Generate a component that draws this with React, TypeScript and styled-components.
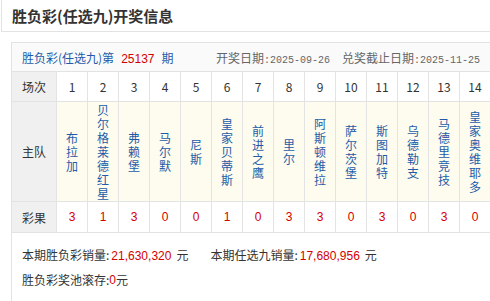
import styled, { createGlobalStyle } from "styled-components";

const GlobalStyle = createGlobalStyle`
    body {
        margin: 0;
        background: #fff;
        font-family: "Noto Sans CJK SC", "Liberation Sans", sans-serif;
        font-size: 12px;
        color: #333;
        overflow: hidden;
    }
`;

const TitleBox = styled.div`
    margin: -1px 0 0 1px;
    width: 490px;
    height: 33px;
    box-sizing: border-box;
    border: 1px solid #e3e3e3;
    padding-left: 10px;
    display: flex;
    align-items: center;
`;
const Title = styled.h1`
    margin: 0;
    font-size: 15px;
    font-weight: 700;
    color: #333;
`;
const Panel = styled.div`
    margin: 10px 0 0 11px;
    width: 480px;
    box-sizing: border-box;
    border: 1px solid #e3e3e3;
`;
const PanelHead = styled.div`
    height: 29px;
    box-sizing: border-box;
    border-bottom: 1px solid #e3e3e3;
    background: #fafafa;
    padding: 0 10px;
    display: flex;
    align-items: center;
    justify-content: space-between;
`;
const Issue = styled.span`
    color: #1f5ba8;
`;
const Red = styled.span<{ $m?: string }>`
    color: #d40000;
    font-family: "Liberation Sans", Arial, sans-serif;
    margin: ${(p) => p.$m || "0"};
`;
const Dates = styled.div`
    color: #666;
    display: flex;
    gap: 12px;
`;
const Mono = styled.span`
    font-family: "Liberation Mono", monospace;
    font-size: 10px;
`;
const Row = styled.div<{ $h: number }>`
    display: grid;
    grid-template-columns: 45px repeat(14, 31px);
    height: ${(p) => p.$h}px;
`;
const Cell = styled.div<{ $bg?: string; $red?: boolean }>`
    box-sizing: border-box;
    border-right: 1px solid #e3e3e3;
    border-bottom: 1px solid #e3e3e3;
    background: ${(p) => p.$bg || "#fff"};
    color: ${(p) => (p.$red ? "#d40000" : "#333")};
    font-family: ${(p) => (p.$red ? `"Liberation Sans", Arial, sans-serif` : "inherit")};
    display: flex;
    align-items: center;
    justify-content: center;
    overflow: hidden;
`;
const Label = styled(Cell)`
    background: #f0f0f0;
`;
const Team = styled.span`
    display: block;
    width: 12px;
    line-height: 14px;
    word-break: break-all;
    color: #1f5ba8;
`;
const Footer = styled.div`
    padding: 10px 10px 12px;
    line-height: 24px;
`;
const Line = styled.div`
    display: flex;
`;
const Stat = styled.span`
    margin-right: 22px;
`;

const teams = [
    "布拉加", "贝尔格莱德红星", "弗赖堡", "马尔默", "尼斯", "皇家贝蒂斯", "前进之鹰",
    "里尔", "阿斯顿维拉", "萨尔茨堡", "斯图加特", "乌德勒支", "马德里竞技", "皇家奥维耶多",
];
const results = [3, 1, 3, 0, 0, 1, 0, 3, 3, 0, 3, 0, 3, 0];

export default function App() {
    return <>
        <GlobalStyle />
        <TitleBox>
            <Title>胜负彩(任选九)开奖信息</Title>
        </TitleBox>
        <Panel>
            <PanelHead>
                <Issue>胜负彩(任选九)第<Red $m="0 7px">25137</Red>期</Issue>
                <Dates>
                    <span>开奖日期<Mono>:2025-09-26</Mono></span>
                    <span>兑奖截止日期<Mono>:2025-11-25</Mono></span>
                </Dates>
            </PanelHead>
            <Row $h={30}>
                <Label>场次</Label>
                {teams.map((_, i) => <Cell key={i}>{i + 1}</Cell>)}
            </Row>
            <Row $h={100}>
                <Label>主队</Label>
                {teams.map((t) => <Cell key={t} $bg="#fdfcee"><Team>{t}</Team></Cell>)}
            </Row>
            <Row $h={31}>
                <Label>彩果</Label>
                {results.map((r, i) => <Cell key={i} $red>{r}</Cell>)}
            </Row>
            <Footer>
                <Line>
                    <Stat>本期胜负彩销量:<Red $m="0 5px 0 2px">21,630,320</Red>元</Stat>
                    <Stat>本期任选九销量:<Red $m="0 5px 0 2px">17,680,956</Red>元</Stat>
                </Line>
                <Line>胜负彩奖池滚存:<Red>0</Red>元</Line>
            </Footer>
        </Panel>
    </>;
}
